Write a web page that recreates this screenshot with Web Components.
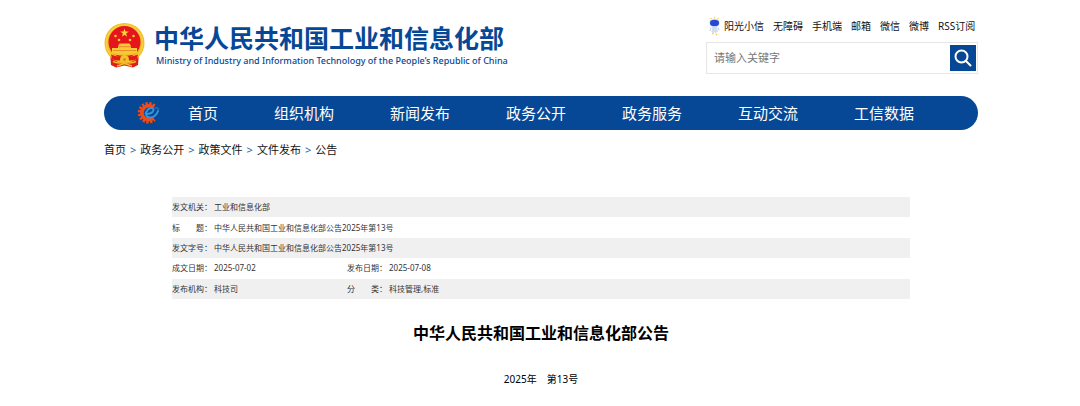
<!DOCTYPE html>
<html lang="zh-CN">
<head>
<meta charset="UTF-8">
<meta name="viewport" content="width=device-width, initial-scale=1">
<title>中华人民共和国工业和信息化部公告</title>
<style>
    body {
        margin: 0;
        background: #fff;
        color: #000;
        font-family: "Noto Sans", "Noto Sans CJK SC", sans-serif;
    }
</style>
</head>
<body>

<site-page>

    <site-header slot="header">
        <site-brand>
            中华人民共和国工业和信息化部
            <span slot="english">Ministry of Industry and Information Technology of the People’s Republic of China</span>
        </site-brand>
        <tool-links slot="tools">
            <a href="#">阳光小信</a>
            <a href="#">无障碍</a>
            <a href="#">手机端</a>
            <a href="#">邮箱</a>
            <a href="#">微信</a>
            <a href="#">微博</a>
            <a href="#">RSS订阅</a>
        </tool-links>
        <search-box slot="tools"></search-box>
    </site-header>

    <main-nav slot="header">
        <a href="#">首页</a>
        <a href="#">组织机构</a>
        <a href="#">新闻发布</a>
        <a href="#">政务公开</a>
        <a href="#">政务服务</a>
        <a href="#">互动交流</a>
        <a href="#">工信数据</a>
    </main-nav>

    <bread-crumb slot="header">
        <a href="#">首页</a>
        <a href="#">政务公开</a>
        <a href="#">政策文件</a>
        <a href="#">文件发布</a>
        <a href="#">公告</a>
    </bread-crumb>

    <doc-info></doc-info>

    <doc-title>
        中华人民共和国工业和信息化部公告
        <span slot="number">2025年　第13号</span>
    </doc-title>

</site-page>

<template id="site-page">
    <style>
        :host {
            display: block;
            padding: 17px 102px 16px 104px;
        }

        main {
            padding: 0 68px;
        }
    </style>
    <header><slot name="header"></slot></header>
    <main><slot></slot></main>
</template>

<template id="site-header">
    <style>
        :host {
            display: flex;
            justify-content: space-between;
            align-items: flex-start;
        }

        .tools {
            display: flex;
            flex-direction: column;
            gap: 6px;
            width: 272px;
        }
    </style>
    <slot></slot>
    <div class="tools"><slot name="tools"></slot></div>
</template>

<template id="site-brand">
    <style>
        :host {
            display: flex;
            align-items: flex-start;
            gap: 9px;
            padding-top: 6px;
            color: #074896;
        }

        svg {
            width: 41px;
            height: 45px;
        }

        .name {
            font-family: "Liberation Sans", "Noto Sans CJK SC", sans-serif;
            font-size: 25px;
            line-height: 32px;
            font-weight: 700;
            white-space: nowrap;
        }

        .english {
            padding-left: 2px;
            font-size: 9px;
            line-height: 12px;
            font-weight: 500;
            white-space: nowrap;
        }
    </style>
    <svg viewBox="0 0 41 45" aria-hidden="true">
        <path d="M6 30h29l-1 12-5 2.500-8.500-2-8.500 2-5-2.500z" fill="#dd1f14"/>
        <circle cx="20.500" cy="20" r="20" fill="#f0bf28"/>
        <circle cx="20.500" cy="20" r="18" fill="none" stroke="#f7d045" stroke-width="1.500"/>
        <circle cx="20.500" cy="19" r="16" fill="#e6141b"/>
        <path d="M20.500 5.500l1 3.100h3.300l-2.700 1.900 1 3.200-2.600-2-2.600 2 1-3.200-2.700-1.900h3.300z" fill="#ffd83c"/>
        <g fill="#f9c835">
            <circle cx="11.500" cy="13" r="1.300"/>
            <circle cx="29.500" cy="13" r="1.300"/>
            <circle cx="15" cy="17" r="1.300"/>
            <circle cx="26" cy="17" r="1.300"/>
            <path d="M15.500 20.500h10l1.500 2.500v2h6v5l-4 2H12l-4-2v-5h6v-2z"/>
        </g>
        <path d="M14 23.700h13M9 27.500h23" stroke="#e2651f" stroke-width=".6"/>
        <path d="M7 31.500q5 2.500 10 2l1.500-1.500h4l1.500 1.500q5 .5 10-2l-1 4.500q-4 2-8 1.500l-4.500-1.500-4.500 1.500q-4 .5-8-1.500z" fill="#e21b18"/>
        <path d="M11 30.500q4.500 1.500 9.500 1.500t9.500-1.500" fill="none" stroke="#f3c22c" stroke-width="1.500"/>
        <circle cx="20.500" cy="36.500" r="4.500" fill="#f3c22c"/>
        <circle cx="20.500" cy="36.500" r="1.300" fill="#e0781c"/>
        <path d="M9 38.500q5 2.500 11.500.5 6.500 2 11.500-.5M13 43l7.500-2.500L28 43" fill="none" stroke="#f0ba26" stroke-width="1.500"/>
    </svg>
    <div>
        <div class="name"><slot></slot></div>
        <div class="english"><slot name="english"></slot></div>
    </div>
</template>

<template id="tool-links">
    <style>
        :host {
            display: flex;
            align-items: center;
            gap: 9px;
            padding-left: 3px;
            font-size: 10px;
            line-height: 19px;
            white-space: nowrap;
        }

        svg {
            width: 11px;
            height: 19px;
            margin-right: -5px;
        }

        ::slotted(a) {
            color: #111;
            text-decoration: none;
        }
    </style>
    <svg viewBox="0 0 11 19" aria-hidden="true">
        <g fill="#f5d547">
            <circle cx="2" cy="1.500" r=".8"/>
            <circle cx="5.500" cy=".9" r=".8"/>
            <circle cx="9" cy="1.500" r=".8"/>
            <circle cx="1" cy="4" r=".6"/>
            <circle cx="10" cy="4" r=".6"/>
            <circle cx="4" cy="16.500" r=".9"/>
            <circle cx="7.500" cy="17.500" r=".9"/>
        </g>
        <ellipse cx="5.500" cy="6" rx="5" ry="4" fill="#b9cdf3"/>
        <rect x="1" y="3" width="9" height="6" rx="3" fill="#2549d4"/>
        <path d="M3 10h5l1 5H7.500L7 17l-1.500-2L4 16.500 2.500 15z" fill="#d3def0"/>
        <path d="M2 10.500L.8 14M9 10.500l1.200 3" stroke="#c3d2ea" stroke-width="1"/>
    </svg>
    <slot></slot>
</template>

<template id="search-box">
    <style>
        :host {
            display: block;
        }

        form {
            display: flex;
            align-items: center;
            border: 1px solid #e6e6e6;
            padding: 1px;
        }

        input {
            flex: 1;
            min-width: 0;
            border: 0;
            padding: 0 6px;
            outline: none;
            background: none;
            font: 11px/28px "Noto Sans", "Noto Sans CJK SC", sans-serif;
        }

        input::placeholder {
            color: #777;
        }

        button {
            display: flex;
            justify-content: center;
            align-items: center;
            width: 26px;
            height: 26px;
            border: 0;
            padding: 0;
            background: #074896;
        }

        svg {
            width: 18px;
            height: 18px;
        }
    </style>
    <form>
        <input type="text" placeholder="请输入关键字" aria-label="请输入关键字">
        <button type="button" aria-label="搜索">
            <svg viewBox="0 0 18 18" fill="none" stroke="#fff" stroke-width="2" stroke-linecap="round" aria-hidden="true">
                <circle cx="7.500" cy="7.500" r="6"/>
                <path d="M12 12l4.500 4.500"/>
            </svg>
        </button>
    </form>
</template>

<template id="main-nav">
    <style>
        :host {
            display: block;
            margin-top: 22px;
        }

        nav {
            display: flex;
            align-items: center;
            gap: 56px;
            border-radius: 17px;
            padding-left: 33px;
            background: #074896;
            font-size: 15px;
            line-height: 34px;
            white-space: nowrap;
        }

        svg {
            width: 23px;
            height: 24px;
            margin-right: -28px;
        }

        ::slotted(a) {
            color: #fff;
            text-decoration: none;
        }
    </style>
    <nav>
        <svg viewBox="0 0 23 24" fill="none" aria-hidden="true">
            <path d="M17.500 5A9 9 0 1 0 17.500 18.500" stroke="#f04b16" stroke-width="3.500" stroke-dasharray="2.200 1.400"/>
            <path d="M16.500 6.500A7 7 0 1 0 16.500 17" stroke="#f04b16" stroke-width="3.600"/>
            <path d="M8.500 12.500c3 1 7.500-.5 8-3.500.3-2.500-3.500-2.500-5.500-.5-3 3-2.500 7.500 1.500 8 4 .4 7.500-3 8.500-6.500" stroke="#3795dc" stroke-width="1.900" stroke-linecap="round"/>
            <path d="M17.500 7c2.500-1 4.500.5 4 2.500" stroke="#246fb8" stroke-width="1.500"/>
        </svg>
        <slot></slot>
    </nav>
</template>

<template id="bread-crumb">
    <style>
        :host {
            display: block;
            padding: 11px 0 39px;
            font-size: 11px;
            line-height: 17px;
        }

        nav {
            display: flex;
        }

        ::slotted(a) {
            color: #111;
            text-decoration: none;
        }

        ::slotted(a:not(:last-child))::after {
            content: ">";
            margin: 0 4px;
            color: #2a62a5;
            font-size: 11px;
        }
    </style>
    <nav><slot></slot></nav>
</template>

<template id="doc-info">
    <style>
        :host {
            display: block;
        }

        table {
            width: 100%;
            height: 102px;
            border-collapse: collapse;
            table-layout: fixed;
            color: #333;
            font-size: 8px;
            line-height: 12px;
        }

        .label {
            width: 42px;
        }

        .short {
            width: 133px;
        }

        tr:nth-child(odd) {
            background: #f0f0f0;
        }

        th, td {
            padding: 0;
            font-weight: 400;
            text-align: left;
            white-space: nowrap;
        }
    </style>
    <table>
        <colgroup><col class="label"><col class="short"><col class="label"><col></colgroup>
        <tbody>
            <tr><th scope="row">发文机关：</th><td colspan="3">工业和信息化部</td></tr>
            <tr><th scope="row">标　　题：</th><td colspan="3">中华人民共和国工业和信息化部公告2025年第13号</td></tr>
            <tr><th scope="row">发文字号：</th><td colspan="3">中华人民共和国工业和信息化部公告2025年第13号</td></tr>
            <tr><th scope="row">成文日期：</th><td>2025-07-02</td><th scope="row">发布日期：</th><td>2025-07-08</td></tr>
            <tr><th scope="row">发布机构：</th><td>科技司</td><th scope="row">分　　类：</th><td>科技管理,标准</td></tr>
        </tbody>
    </table>
</template>

<template id="doc-title">
    <style>
        :host {
            display: block;
            padding-top: 22px;
            text-align: center;
        }

        h1 {
            margin: 0 0 26px;
            font-size: 16px;
            line-height: 24px;
            font-weight: 700;
        }

        p {
            margin: 0;
            font-size: 10px;
            line-height: 16px;
        }
    </style>
    <h1><slot></slot></h1>
    <p><slot name="number"></slot></p>
</template>

<script>
class TemplateElement extends HTMLElement {

    constructor() {

        super();

        const template = document.getElementById(this.localName);

        this.attachShadow({ mode: "open" });

        this.shadowRoot.appendChild(
            template.content.cloneNode(true)
        );
    }
}

customElements.define("site-page", class extends TemplateElement {});
customElements.define("site-header", class extends TemplateElement {});
customElements.define("site-brand", class extends TemplateElement {});
customElements.define("tool-links", class extends TemplateElement {});
customElements.define("search-box", class extends TemplateElement {});
customElements.define("main-nav", class extends TemplateElement {});
customElements.define("bread-crumb", class extends TemplateElement {});
customElements.define("doc-info", class extends TemplateElement {});
customElements.define("doc-title", class extends TemplateElement {});
</script>
</body>
</html>
